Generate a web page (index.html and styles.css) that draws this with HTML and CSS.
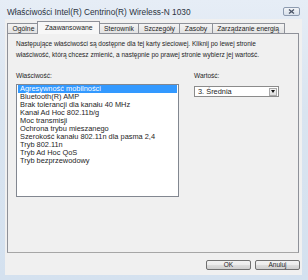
FILE: index.html
```html
<!DOCTYPE html>
<html>

<head>
  <meta charset="UTF-8">
  <title>Właściwości Intel(R) Centrino(R) Wireless-N 1030</title>
  <link rel="stylesheet" href="styles.css">
</head>

<body>

  <div class="window">
    <div class="titlebar">
      <span class="title">Właściwości Intel(R) Centrino(R) Wireless-N 1030</span>
      <button class="close" title="Zamknij">
        <svg width="7" height="5" viewBox="0 0 7 5">
          <path d="M1 0.5 L6 4.5 M6 0.5 L1 4.5" stroke="#4b5568" stroke-width="1.3" fill="none"/>
        </svg>
      </button>
    </div>

    <div class="client">
      <div class="tabs">
        <div class="tab">Ogólne</div>
        <div class="tab active">Zaawansowane</div>
        <div class="tab">Sterownik</div>
        <div class="tab">Szczegóły</div>
        <div class="tab">Zasoby</div>
        <div class="tab">Zarządzanie energią</div>
      </div>

      <div class="page">
        <p class="intro">Następujące właściwości są dostępne dla tej karty sieciowej. Kliknij po lewej stronie<br>właściwość, którą chcesz zmienić, a następnie po prawej stronie wybierz jej wartość.</p>

        <div class="fields">
          <div class="field field-prop">
            <label>Właściwość:</label>
            <ul class="listbox">
              <li class="selected">Agresywność mobilności</li>
              <li>Bluetooth(R) AMP</li>
              <li>Brak tolerancji dla kanału 40 MHz</li>
              <li>Kanał Ad Hoc 802.11b/g</li>
              <li>Moc transmisji</li>
              <li>Ochrona trybu mieszanego</li>
              <li>Szerokość kanału 802.11n dla pasma 2,4</li>
              <li>Tryb 802.11n</li>
              <li>Tryb Ad Hoc QoS</li>
              <li>Tryb bezprzewodowy</li>
            </ul>
          </div>
          <div class="field field-value">
            <label>Wartość:</label>
            <div class="combo">
              <span class="combo-text">3. Średnia</span>
              <span class="combo-arrow"></span>
            </div>
          </div>
        </div>
      </div>

      <div class="buttons">
        <button class="btn">OK</button>
        <button class="btn">Anuluj</button>
      </div>
    </div>
  </div>

</body>

</html>
```

FILE: styles.css
```css
body * {
  box-sizing: border-box;
}

body {
  margin: 0;
  font-family: "Liberation Sans", Arial, sans-serif;
  font-size: 6.5px;
  color: #1e1e1e;
}

.window {
  width: 308px;
  height: 280px;
  display: flex;
  flex-direction: column;
  padding: 0 6px 5px 5px;
  background: linear-gradient(to bottom, #e6edf6 0%, #d9e4f0 40%, #d4e1ef 100%);
}

.titlebar {
  height: 19px;
  display: flex;
  align-items: center;
  justify-content: space-between;
  padding: 4px 2px 0 2px;
}

.title {
  font-size: 8.3px;
  color: #2b3340;
}

.close {
  width: 17px;
  height: 9px;
  padding: 0;
  display: flex;
  align-items: center;
  justify-content: center;
  border: 1px solid #8d9bb0;
  border-radius: 2px;
  background: linear-gradient(to bottom, #f1f4f8, #d9e1eb);
}

.client {
  flex: 1;
  display: flex;
  flex-direction: column;
  padding: 2px 2px 5px 2px;
  background: #f0f0f0;
}

.tabs {
  display: flex;
  align-items: flex-end;
  height: 12px;
  font-size: 6.8px;
}

.tab {
  height: 10px;
  line-height: 9px;
  padding: 0 4.5px;
  margin-right: -1px;
  border: 1px solid #8e9199;
  border-bottom: none;
  background: linear-gradient(to bottom, #f4f4f4, #e2e2e2);
  white-space: nowrap;
}

.tab.active {
  position: relative;
  z-index: 1;
  height: 13px;
  line-height: 11px;
  margin: 0 -1px -1px -2px;
  padding: 0 6px 0 7px;
  background: #f7f7f7;
}

.page {
  flex: 1;
  margin-right: 1px;
  padding: 4px 8px;
  border: 1px solid #8e9199;
  border-bottom-color: #a6a6a6;
  background: #f0f0f0;
}

.intro {
  margin: 0;
  line-height: 11px;
}

.fields {
  display: flex;
  gap: 15px;
  margin-top: 12px;
}

.field label {
  display: block;
  line-height: 8px;
  margin-bottom: 4px;
}

.field-prop {
  width: 163px;
}

.listbox {
  list-style: none;
  margin: 0;
  padding: 0 1px;
  height: 113px;
  border: 1px solid #828790;
  background: #fff;
  font-size: 7.4px;
}

.listbox li {
  height: 8px;
  line-height: 8px;
  padding-left: 2px;
  white-space: nowrap;
}

.listbox li.selected {
  background: #3399ff;
  color: #fff;
}

.field-value {
  width: 85px;
}

.field-value label {
  margin-bottom: 6px;
}

.combo {
  display: flex;
  align-items: center;
  height: 11px;
  border: 1px solid #8b8b8b;
  background: #fff;
  padding: 1px;
  font-size: 7.4px;
}

.combo-text {
  flex: 1;
  padding-left: 2px;
}

.combo-arrow {
  width: 8px;
  height: 8px;
  display: flex;
  align-items: center;
  justify-content: center;
  border: 1px solid #a9a9a9;
  background: linear-gradient(to bottom, #f4f4f4, #dcdcdc);
}

.combo-arrow::after {
  content: "";
  border-left: 2.5px solid transparent;
  border-right: 2.5px solid transparent;
  border-top: 3px solid #111;
}

.buttons {
  display: flex;
  justify-content: flex-end;
  gap: 4px;
  margin-top: 7px;
}

.btn {
  width: 45px;
  height: 10px;
  padding: 0;
  font: inherit;
  line-height: 8px;
  color: #1e1e1e;
  border: 1px solid #707070;
  border-radius: 2px;
  background: linear-gradient(to bottom, #f2f2f2 0%, #ebebeb 50%, #dddddd 51%, #cfcfcf 100%);
}
```
